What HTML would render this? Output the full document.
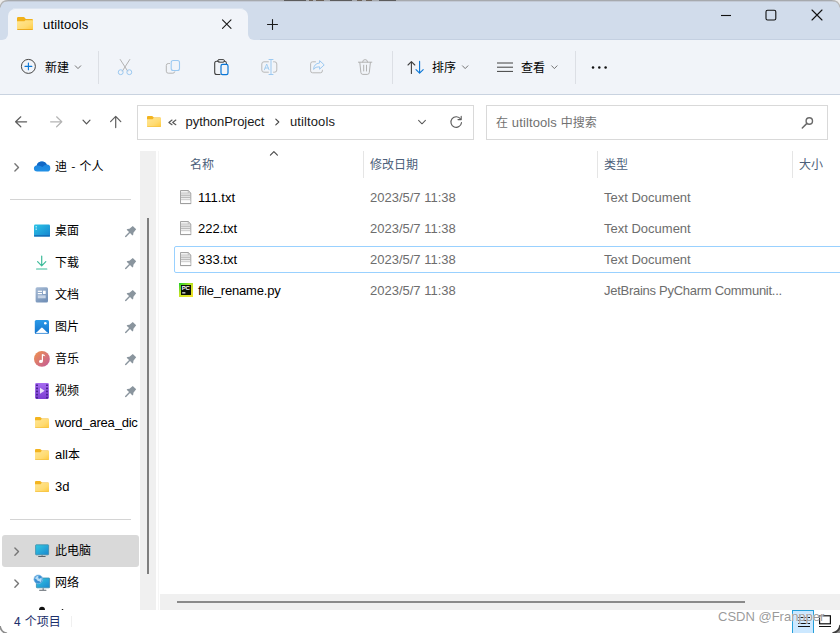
<!DOCTYPE html>
<html lang="zh-CN">
<head>
<meta charset="utf-8">
<title>utiltools</title>
<style>
*{box-sizing:border-box;margin:0;padding:0}
html,body{width:840px;height:633px;overflow:hidden;background:#fff}
body{position:relative;font-family:"Liberation Sans","Noto Sans CJK SC",sans-serif;font-size:12px;color:#000}
.abs{position:absolute}
.t{position:absolute;white-space:nowrap;line-height:16px}
.c{font-family:"Noto Sans CJK SC","Liberation Sans",sans-serif;font-size:12px}
.l{font-family:"Liberation Sans","Noto Sans CJK SC",sans-serif;font-size:13px}
#titlebar{left:0;top:0;width:840px;height:40px;background:#d1dceb}
#tab{left:8px;top:9px;width:240px;height:31px;background:#f1f4f9;border-radius:7px 7px 0 0}
#toolbar{left:0;top:40px;width:840px;height:55px;background:#f1f4f9;border-bottom:1px solid #c9d3e0}
.vsep{position:absolute;width:1px;background:#dcdfe5;top:51px;height:33px}
#addr{left:137px;top:105px;width:337px;height:35px;border:1px solid #d9d9d9;background:#fff}
#search{left:486px;top:105px;width:342px;height:35px;border:1px solid #d9d9d9;background:#fff}
#navstrip{left:140px;top:151px;width:16px;height:459px;background:#f0f0f0}
#navthumb{left:147px;top:218px;width:2px;height:356px;background:#7f7f7f}
.nsep{position:absolute;left:10px;width:121px;height:1px;background:#d4d4d4}
.nav{position:absolute;left:55px;white-space:nowrap;line-height:16px}
#hscroll{left:160px;top:594px;width:680px;height:16px;background:#f0f0f0}
#hthumb{left:177px;top:601px;width:568px;height:2px;background:#8a8a8a}
.hd{position:absolute;top:156px;color:#4c607a;white-space:nowrap;line-height:16px}
.csep{position:absolute;top:151px;width:1px;height:27px;background:#e5e5e5}
.fn{position:absolute;left:198px;white-space:nowrap;line-height:16px;color:#000}
.fd{position:absolute;left:370px;white-space:nowrap;line-height:16px;color:#6d6d6d}
.ft{position:absolute;left:604px;white-space:nowrap;line-height:16px;color:#6d6d6d}
svg{position:absolute;overflow:visible}
</style>
</head>
<body>
<!-- title bar -->
<div id="titlebar" class="abs"></div>
<div class="abs" style="left:0;top:0;width:840px;height:1px;background:#a6a9ad"></div>
<div class="abs" style="left:0;top:1px;width:840px;height:1px;background:#c3cad6"></div>
<div class="abs" style="left:284px;top:0;width:22px;height:1px;background:#5c5c5c"></div>
<div class="abs" style="left:309px;top:0;width:4px;height:1px;background:#6a6056"></div>
<div class="abs" style="left:316px;top:0;width:8px;height:1px;background:#6a6056"></div>
<div class="abs" style="left:330px;top:0;width:22px;height:1px;background:#5c5c5c"></div>
<div class="abs" style="left:357px;top:0;width:5px;height:1px;background:#6a6056"></div>
<div class="abs" style="left:366px;top:0;width:6px;height:1px;background:#6a6056"></div>
<div class="abs" style="left:379px;top:0;width:17px;height:1px;background:#5c5c5c"></div>
<div class="abs" style="left:0;top:39px;width:840px;height:1px;background:#c4d0e1"></div>
<div class="abs" style="left:13px;top:8px;width:230px;height:1px;background:#dde5f0"></div>
<div id="tab" class="abs"></div>
<div class="abs" style="left:2px;top:34px;width:6px;height:6px;background:#f1f4f9"></div>
<div class="abs" style="left:-4px;top:28px;width:12px;height:12px;background:#d1dceb;border-radius:0 0 6px 0"></div>
<div class="abs" style="left:248px;top:34px;width:6px;height:6px;background:#f1f4f9"></div>
<div class="abs" style="left:248px;top:28px;width:12px;height:12px;background:#d1dceb;border-radius:0 0 0 6px"></div>
<div class="t l" style="left:43px;top:17px;letter-spacing:0.15px">utiltools</div>

<!-- toolbar -->
<div id="toolbar" class="abs"></div>
<div class="t c" style="left:45px;top:59px">新建</div>
<div class="vsep" style="left:98px"></div>
<div class="vsep" style="left:392px"></div>
<div class="vsep" style="left:575px"></div>
<div class="t c" style="left:432px;top:59px">排序</div>
<div class="t c" style="left:521px;top:59px">查看</div>

<!-- address row -->
<div id="addr" class="abs"></div>
<div class="t l" style="left:185.5px;top:114px;color:#1a1a1a;letter-spacing:-0.05px">pythonProject</div>
<div class="t l" style="left:290px;top:114px;color:#1a1a1a;letter-spacing:0.1px">utiltools</div>
<div id="search" class="abs"></div>
<div class="t c" style="left:496px;top:114px;color:#717171;word-spacing:1.1px">在 <span class="l" style="letter-spacing:0.12px">utiltools</span> 中搜索</div>

<!-- nav pane -->
<div id="navstrip" class="abs"></div>
<div class="abs" style="left:158px;top:151px;width:1px;height:459px;background:#f6f6f6"></div>
<div id="navthumb" class="abs"></div>
<div class="nav c" style="top:158px;word-spacing:1.5px">迪 - 个人</div>
<div class="nsep" style="top:199px"></div>
<div class="nav c" style="top:222px">桌面</div>
<div class="nav c" style="top:254px">下载</div>
<div class="nav c" style="top:286px">文档</div>
<div class="nav c" style="top:318px">图片</div>
<div class="nav c" style="top:350px">音乐</div>
<div class="nav c" style="top:382px">视频</div>

<div class="nav l" style="top:415px;letter-spacing:-0.2px">word_area_dic</div>
<div class="nav c" style="top:446px"><span class="l">all</span>本</div>
<div class="nav l" style="top:479px">3d</div>
<div class="nsep" style="top:519px"></div>
<div class="abs" style="left:2px;top:535px;width:137px;height:32px;background:#d9d9d9;border-radius:3px"></div>
<div class="nav c" style="top:542px">此电脑</div>
<div class="nav c" style="top:574px">网络</div>

<!-- file list -->
<div class="hd c" style="left:190px">名称</div>
<div class="hd c" style="left:370px">修改日期</div>
<div class="hd c" style="left:604px">类型</div>
<div class="hd c" style="left:799px">大小</div>
<div class="csep" style="left:363px"></div>
<div class="csep" style="left:597px"></div>
<div class="csep" style="left:792px"></div>
<div class="abs" style="left:174px;top:246px;width:680px;height:27px;border:1px solid #99d1ff;border-radius:2px"></div>
<div class="fn l" style="top:190px;letter-spacing:0px">111.txt</div><div class="fd l" style="top:190px">2023/5/7 11:38</div><div class="ft l" style="top:190px;letter-spacing:0px">Text Document</div>
<div class="fn l" style="top:221px;letter-spacing:0px">222.txt</div><div class="fd l" style="top:221px">2023/5/7 11:38</div><div class="ft l" style="top:221px;letter-spacing:0px">Text Document</div>
<div class="fn l" style="top:252px;letter-spacing:0px">333.txt</div><div class="fd l" style="top:252px">2023/5/7 11:38</div><div class="ft l" style="top:252px;letter-spacing:0px">Text Document</div>
<div class="fn l" style="top:283px;letter-spacing:-0.2px">file_rename.py</div><div class="fd l" style="top:283px">2023/5/7 11:38</div><div class="ft l" style="top:283px;letter-spacing:-0.27px">JetBrains PyCharm Communit...</div>

<!-- bottom -->
<div id="hscroll" class="abs"></div>
<div id="hthumb" class="abs"></div>
<div class="abs" style="left:0;top:610px;width:840px;height:23px;background:#fff"></div>
<div class="abs" style="left:71px;top:616px;width:1px;height:11px;background:#f0f0f0"></div>
<div class="t c" style="left:14px;top:613px;color:#1c2f6b;word-spacing:1.4px">4 个项目</div>
<svg id="icons" width="840" height="633" viewBox="0 0 840 633" style="left:0;top:0">
<defs>
<linearGradient id="fg" x1="0" y1="0" x2="1" y2="1"><stop offset="0" stop-color="#ffe695"/><stop offset="0.6" stop-color="#ffdb72"/><stop offset="1" stop-color="#ffc93a"/></linearGradient>
<linearGradient id="desk" x1="0" y1="0" x2="1" y2="1"><stop offset="0" stop-color="#2cc4e6"/><stop offset="1" stop-color="#1583cf"/></linearGradient>
<linearGradient id="doc" x1="0" y1="0" x2="0.6" y2="1"><stop offset="0" stop-color="#a9bdd6"/><stop offset="1" stop-color="#7391b8"/></linearGradient><linearGradient id="vid" x1="0" y1="0" x2="0" y2="1"><stop offset="0" stop-color="#a56bf0"/><stop offset="1" stop-color="#7c3ed2"/></linearGradient><linearGradient id="mon" x1="0" y1="0" x2="1" y2="1"><stop offset="0" stop-color="#33cbe2"/><stop offset="1" stop-color="#1a86cf"/></linearGradient><linearGradient id="pic" x1="0" y1="0" x2="0" y2="1"><stop offset="0" stop-color="#2b9ae8"/><stop offset="1" stop-color="#1273cc"/></linearGradient>
<linearGradient id="mus" x1="0" y1="0" x2="1" y2="1"><stop offset="0" stop-color="#f0934c"/><stop offset="1" stop-color="#c25a9a"/></linearGradient>
<linearGradient id="pcg" x1="0" y1="0" x2="0.8" y2="1"><stop offset="0" stop-color="#19cf2a"/><stop offset="0.5" stop-color="#c2e224"/><stop offset="1" stop-color="#ece02a"/></linearGradient>
<linearGradient id="cloud" x1="0" y1="0" x2="0" y2="1"><stop offset="0" stop-color="#1b82dc"/><stop offset="1" stop-color="#2190e6"/></linearGradient>
</defs>
<g transform="translate(17,17)">
<path d="M0 1.2 Q0 0 1.2 0 H6.6 Q7.2 0 7.6 0.5 L8.8 1.9 H14.8 Q16 1.9 16 3.1 V6 H0 Z" fill="#f1b11b"/>
<path d="M0 4.2 H7.4 L8.4 3.3 H16 V11.8 Q16 13 14.8 13 H1.2 Q0 13 0 11.8 Z" fill="url(#fg)"/>
<path d="M0 11.9 H16 Q16 13 14.8 13 H1.2 Q0 13 0 11.9 Z" fill="#ecab20"/>
</g>
<path d="M222.5 19.8 L231 28.3 M231 19.8 L222.5 28.3" stroke="#1a1a1a" stroke-width="1.1" fill="none" stroke-linecap="round"/>
<path d="M267.5 24.5 H277.5 M272.5 19.5 V29.5" stroke="#1a1a1a" stroke-width="1.1" fill="none" stroke-linecap="round"/>
<path d="M721 15.5 H731" stroke="#111" stroke-width="1.1" fill="none"/>
<rect x="766" y="10.2" width="9.8" height="9.8" rx="1.6" fill="none" stroke="#111" stroke-width="1.1"/>
<path d="M812 10 L822 20 M822 10 L812 20" stroke="#111" stroke-width="1.1" fill="none" stroke-linecap="round"/>
<circle cx="28.4" cy="66.4" r="7" fill="none" stroke="#454545" stroke-width="1"/>
<path d="M25 66.4 H31.8 M28.4 63 V69.8" stroke="#0a76d6" stroke-width="1.1" fill="none" stroke-linecap="round"/>
<path d="M75.3 65.8 L78 68.60000000000001 L80.7 65.8" fill="none" stroke="#757575" stroke-width="1" stroke-linecap="round" stroke-linejoin="round"/>
<path d="M120.2 59.5 L127.6 71 M129.8 59.5 L122.4 71" stroke="#b3b3b3" stroke-width="1" fill="none" stroke-linecap="round"/>
<circle cx="120.7" cy="72.2" r="2.45" fill="none" stroke="#9cc9f1" stroke-width="1"/><circle cx="129.3" cy="72.2" r="2.45" fill="none" stroke="#9cc9f1" stroke-width="1"/>
<path d="M169.5 63.5 H168.3 Q166.3 63.5 166.3 65.5 V71.2 Q166.3 73.2 168.3 73.2 H172.8 Q174.6 73.2 174.8 71.8" fill="none" stroke="#b5b5b5" stroke-width="1" stroke-linecap="round"/>
<rect x="171.2" y="60.5" width="8.3" height="10" rx="2" fill="none" stroke="#9cc9f1" stroke-width="1.1"/>
<path d="M219 61.2 H216.7 Q214.7 61.2 214.7 63.2 V72.5 Q214.7 74.5 216.7 74.5 H220" fill="none" stroke="#404040" stroke-width="1.1" stroke-linecap="round"/>
<path d="M224 61.2 H224.6 Q226.4 61.2 226.4 63.2 V63.6" fill="none" stroke="#404040" stroke-width="1.1" stroke-linecap="round"/>
<rect x="217.7" y="59.6" width="6.8" height="2.6" rx="1.3" fill="none" stroke="#404040" stroke-width="1"/>
<rect x="221" y="64.4" width="7" height="10.2" rx="1.6" fill="none" stroke="#0a76d6" stroke-width="1.2"/>
<path d="M268.4 61.8 H264 Q261.8 61.8 261.8 64 V70 Q261.8 72.2 264 72.2 H268.4" fill="none" stroke="#b8b8b8" stroke-width="1" stroke-linecap="round"/>
<path d="M273.6 61.8 H274.6 Q276.8 61.8 276.8 64 V70 Q276.8 72.2 274.6 72.2 H273.6" fill="none" stroke="#b8b8b8" stroke-width="1" stroke-linecap="round"/>
<path d="M269 59.5 H273 M271 59.5 V74.5 M269 74.5 H273" fill="none" stroke="#9cc9f1" stroke-width="1" stroke-linecap="round"/>
<path d="M264.4 69.8 L266.7 64 L269 69.8 M265.2 68 H268.2" fill="none" stroke="#9cc9f1" stroke-width="0.9" stroke-linecap="round" stroke-linejoin="round"/>
<path d="M315.5 61.8 H312.6 Q310.6 61.8 310.6 63.8 V70.8 Q310.6 72.8 312.6 72.8 H320.4 Q322.4 72.8 322.4 70.8 V70.2" fill="none" stroke="#b8b8b8" stroke-width="1" stroke-linecap="round"/>
<path d="M319.6 60.6 L324.2 64.9 L319.6 69.2 V66.8 Q315.4 66.4 313.6 69.4 Q313.8 63.6 319.6 63 Z" fill="none" stroke="#9cc9f1" stroke-width="1" stroke-linejoin="round"/>
<path d="M358.4 62.2 H371.8 M362.6 62 Q362.6 59.6 365.1 59.6 Q367.6 59.6 367.6 62 M359.8 62.4 L360.9 72.6 Q361.1 74.4 362.9 74.4 H367.3 Q369.1 74.4 369.3 72.6 L370.4 62.4 M363.7 65.2 V71 M366.5 65.2 V71" fill="none" stroke="#b3b3b3" stroke-width="1" stroke-linecap="round" stroke-linejoin="round"/>
<path d="M411.4 73.4 V61.6 M408 65 L411.4 61.6 L414.8 65" fill="none" stroke="#404040" stroke-width="1.1" stroke-linecap="round" stroke-linejoin="round"/>
<path d="M419.6 61.4 V73.2 M416 69.6 L419.6 73.2 L423.2 69.6" fill="none" stroke="#0a76d6" stroke-width="1.1" stroke-linecap="round" stroke-linejoin="round"/>
<path d="M462.5 65.8 L465.2 68.60000000000001 L467.9 65.8" fill="none" stroke="#757575" stroke-width="1" stroke-linecap="round" stroke-linejoin="round"/>
<path d="M497 63 H513 M497 67.2 H513 M497 71.4 H513" stroke="#404040" stroke-width="1" fill="none"/>
<path d="M551.6999999999999 65.8 L554.4 68.60000000000001 L557.1 65.8" fill="none" stroke="#757575" stroke-width="1" stroke-linecap="round" stroke-linejoin="round"/>
<circle cx="593" cy="67.6" r="1.25" fill="#111"/><circle cx="599.3" cy="67.6" r="1.25" fill="#111"/><circle cx="605.6" cy="67.6" r="1.25" fill="#111"/>
<path d="M26.6 121.8 H15.8 M20.8 116.8 L15.6 121.8 L20.8 126.8" fill="none" stroke="#5e5e5e" stroke-width="1.2" stroke-linecap="round" stroke-linejoin="round"/>
<path d="M50.6 121.8 H61.6 M56.6 116.8 L61.8 121.8 L56.6 126.8" fill="none" stroke="#b4b4b4" stroke-width="1.2" stroke-linecap="round" stroke-linejoin="round"/>
<path d="M83.0 120.1 L86.5 123.9 L90.0 120.1" fill="none" stroke="#555" stroke-width="1.2" stroke-linecap="round" stroke-linejoin="round"/>
<path d="M115.7 127.6 V116.6 M110.6 121.6 L115.7 116.4 L120.8 121.6" fill="none" stroke="#5e5e5e" stroke-width="1.2" stroke-linecap="round" stroke-linejoin="round"/>
<g transform="translate(147,116)">
<path d="M0 1 Q0 0 1 0 H5 Q5.5 0 5.9 0.4 L6.8 1.5 H13 Q14 1.5 14 2.5 V5 H0 Z" fill="#f3b41f"/>
<path d="M0 3.2 H5.6 L6.6 1.9 H14 V10.2 Q14 11 13.2 11 H0.8 Q0 11 0 10.2 Z" fill="url(#fg)"/>
<path d="M0 10.3 H14 Q14 11 13.2 11 H0.8 Q0 11 0 10.3 Z" fill="#f6c445"/>
</g>
<path d="M172 120.1 L168.9 122.4 L172 124.7 M175.8 120.1 L172.7 122.4 L175.8 124.7" fill="none" stroke="#5a5a5a" stroke-width="1.25" stroke-linecap="round" stroke-linejoin="round"/>
<path d="M275.8 119.2 L278.8 122 L275.8 124.8" fill="none" stroke="#444" stroke-width="1.1" stroke-linecap="round" stroke-linejoin="round"/>
<path d="M418.6 120.39999999999999 L422 123.8 L425.4 120.39999999999999" fill="none" stroke="#5a5a5a" stroke-width="1.05" stroke-linecap="round" stroke-linejoin="round"/>
<path d="M460.6 119.0 A5.3 5.3 0 1 0 461.5 122.6" fill="none" stroke="#5a5a5a" stroke-width="1.1" stroke-linecap="round"/>
<path d="M461.2 116.4 V119.6 H458" fill="none" stroke="#5a5a5a" stroke-width="1.1" stroke-linecap="round" stroke-linejoin="round"/>
<circle cx="809.3" cy="121" r="3.2" fill="none" stroke="#6a6a6a" stroke-width="1.4"/><path d="M806.9 123.4 L802.3 128" stroke="#6a6a6a" stroke-width="1.5" stroke-linecap="round"/>
<path d="M14.899999999999999 163.8 L18.5 167.4 L14.899999999999999 171.0" fill="none" stroke="#767676" stroke-width="1.4" stroke-linecap="round" stroke-linejoin="round"/>
<path d="M37.2 171.6 Q33.9 171.6 33.9 168.6 Q33.9 166 36.6 165.6 Q37.8 161.4 42 161.4 Q45.4 161.4 46.8 164.6 Q50.3 164.8 50.3 168.2 Q50.3 171.6 47 171.6 Z" fill="url(#cloud)"/>
<path d="M36.6 165.6 Q37.8 161.4 42 161.4 Q45.4 161.4 46.8 164.6 Q44 165 42.4 167 Q40 164.8 36.6 165.6 Z" fill="#1166c4" opacity="0.95"/>
<rect x="34" y="224.6" width="16" height="12" rx="1.2" fill="url(#desk)"/><rect x="34" y="235.2" width="16" height="1.4" rx="0.6" fill="#1366b0"/><rect x="35.6" y="226.2" width="1.2" height="1.2" fill="#d8f4ff"/><rect x="35.6" y="228.6" width="1.2" height="1.2" fill="#d8f4ff"/>
<path d="M41.7 256 V265.6 M37.6 261.6 L41.7 265.8 L45.8 261.6" fill="none" stroke="#3dbb9a" stroke-width="1.2" stroke-linecap="round" stroke-linejoin="round"/><path d="M36.6 269 H46.8" stroke="#3dbb9a" stroke-width="1.2" stroke-linecap="round"/>
<rect x="35.6" y="287.2" width="12.4" height="15.4" rx="1.5" fill="url(#doc)"/><rect x="37.8" y="290.7" width="4.2" height="1.2" fill="#fff"/><rect x="37.8" y="293" width="4.2" height="1.2" fill="#fff"/><rect x="43" y="290.7" width="2.7" height="3.3" fill="#fff"/><rect x="37.8" y="295.3" width="7.9" height="3" fill="#c6d3e5"/>
<rect x="34.8" y="320" width="14.2" height="14" rx="1.6" fill="url(#pic)"/><path d="M36 333 L41.1 327.9 Q41.9 327.2 42.7 327.9 L47.8 333 Z" fill="#fff"/><rect x="36" y="332.6" width="11.8" height="0.8" fill="#cfe6fa"/><circle cx="45.3" cy="323.3" r="1.3" fill="#fff"/>
<circle cx="41.9" cy="358.9" r="7.9" fill="url(#mus)"/><path d="M42.4 354.2 V361.2" stroke="#fff" stroke-width="1.2" fill="none"/><path d="M42.4 354 Q44.8 354.2 45.4 356.4 Q44 355.6 42.4 356 Z" fill="#fff"/><ellipse cx="40.9" cy="361.4" rx="1.9" ry="1.6" fill="#fff"/>
<rect x="35.1" y="383" width="13.8" height="16" rx="1.4" fill="url(#vid)"/><rect x="36" y="384.4" width="2" height="1.7" rx="0.3" fill="#4c2494"/><rect x="46" y="384.4" width="2" height="1.7" rx="0.3" fill="#4c2494"/><rect x="36" y="387.5" width="2" height="1.7" rx="0.3" fill="#4c2494"/><rect x="46" y="387.5" width="2" height="1.7" rx="0.3" fill="#4c2494"/><rect x="36" y="390.6" width="2" height="1.7" rx="0.3" fill="#4c2494"/><rect x="46" y="390.6" width="2" height="1.7" rx="0.3" fill="#4c2494"/><rect x="36" y="393.7" width="2" height="1.7" rx="0.3" fill="#4c2494"/><rect x="46" y="393.7" width="2" height="1.7" rx="0.3" fill="#4c2494"/><rect x="36" y="396.8" width="2" height="1.7" rx="0.3" fill="#4c2494"/><rect x="46" y="396.8" width="2" height="1.7" rx="0.3" fill="#4c2494"/><path d="M40 387.8 L44.6 390.8 L40 393.8 Z" fill="#ece4fa"/>
<g transform="translate(130.1,232.0) rotate(45)" fill="#8a959e" stroke="none">
<path d="M-2.4 -6.2 H2.4 L2.8 -1.9 L4.1 -0.3 V0.8 H0.7 V6.6 Q0 7.2 -0.7 6.6 V0.8 H-4.1 V-0.3 L-2.8 -1.9 Z"/>
</g>
<g transform="translate(130.1,264.0) rotate(45)" fill="#8a959e" stroke="none">
<path d="M-2.4 -6.2 H2.4 L2.8 -1.9 L4.1 -0.3 V0.8 H0.7 V6.6 Q0 7.2 -0.7 6.6 V0.8 H-4.1 V-0.3 L-2.8 -1.9 Z"/>
</g>
<g transform="translate(130.1,296.0) rotate(45)" fill="#8a959e" stroke="none">
<path d="M-2.4 -6.2 H2.4 L2.8 -1.9 L4.1 -0.3 V0.8 H0.7 V6.6 Q0 7.2 -0.7 6.6 V0.8 H-4.1 V-0.3 L-2.8 -1.9 Z"/>
</g>
<g transform="translate(130.1,328.0) rotate(45)" fill="#8a959e" stroke="none">
<path d="M-2.4 -6.2 H2.4 L2.8 -1.9 L4.1 -0.3 V0.8 H0.7 V6.6 Q0 7.2 -0.7 6.6 V0.8 H-4.1 V-0.3 L-2.8 -1.9 Z"/>
</g>
<g transform="translate(130.1,360.0) rotate(45)" fill="#8a959e" stroke="none">
<path d="M-2.4 -6.2 H2.4 L2.8 -1.9 L4.1 -0.3 V0.8 H0.7 V6.6 Q0 7.2 -0.7 6.6 V0.8 H-4.1 V-0.3 L-2.8 -1.9 Z"/>
</g>
<g transform="translate(130.1,392.0) rotate(45)" fill="#8a959e" stroke="none">
<path d="M-2.4 -6.2 H2.4 L2.8 -1.9 L4.1 -0.3 V0.8 H0.7 V6.6 Q0 7.2 -0.7 6.6 V0.8 H-4.1 V-0.3 L-2.8 -1.9 Z"/>
</g>
<g transform="translate(35,417)">
<path d="M0 1 Q0 0 1 0 H5 Q5.5 0 5.9 0.4 L6.8 1.5 H13 Q14 1.5 14 2.5 V5 H0 Z" fill="#f3b41f"/>
<path d="M0 3.2 H5.6 L6.6 1.9 H14 V10.2 Q14 11 13.2 11 H0.8 Q0 11 0 10.2 Z" fill="url(#fg)"/>
<path d="M0 10.3 H14 Q14 11 13.2 11 H0.8 Q0 11 0 10.3 Z" fill="#f6c445"/>
</g>
<g transform="translate(35,449)">
<path d="M0 1 Q0 0 1 0 H5 Q5.5 0 5.9 0.4 L6.8 1.5 H13 Q14 1.5 14 2.5 V5 H0 Z" fill="#f3b41f"/>
<path d="M0 3.2 H5.6 L6.6 1.9 H14 V10.2 Q14 11 13.2 11 H0.8 Q0 11 0 10.2 Z" fill="url(#fg)"/>
<path d="M0 10.3 H14 Q14 11 13.2 11 H0.8 Q0 11 0 10.3 Z" fill="#f6c445"/>
</g>
<g transform="translate(35,481)">
<path d="M0 1 Q0 0 1 0 H5 Q5.5 0 5.9 0.4 L6.8 1.5 H13 Q14 1.5 14 2.5 V5 H0 Z" fill="#f3b41f"/>
<path d="M0 3.2 H5.6 L6.6 1.9 H14 V10.2 Q14 11 13.2 11 H0.8 Q0 11 0 10.2 Z" fill="url(#fg)"/>
<path d="M0 10.3 H14 Q14 11 13.2 11 H0.8 Q0 11 0 10.3 Z" fill="#f6c445"/>
</g>
<path d="M14.899999999999999 548.0 L18.5 551.6 L14.899999999999999 555.2" fill="none" stroke="#767676" stroke-width="1.4" stroke-linecap="round" stroke-linejoin="round"/>
<rect x="35.6" y="544.8" width="13" height="10" rx="0.6" fill="url(#mon)" stroke="#3c8cab" stroke-width="0.8"/><rect x="41.4" y="555.2" width="1.4" height="1.1" fill="#7a8590"/><rect x="38.2" y="556" width="7.4" height="1" rx="0.3" fill="#5b636b"/>
<path d="M14.899999999999999 580.0 L18.5 583.6 L14.899999999999999 587.2" fill="none" stroke="#767676" stroke-width="1.4" stroke-linecap="round" stroke-linejoin="round"/>
<rect x="36.4" y="578" width="13.2" height="9.8" rx="0.6" fill="url(#mon)" stroke="#3c8cab" stroke-width="0.8"/><rect x="42.5" y="588.2" width="1.4" height="1.7" fill="#7a8590"/><rect x="39.2" y="589.8" width="7.2" height="1" rx="0.3" fill="#5b636b"/><circle cx="38.3" cy="579.3" r="4.4" fill="#3b8fd3" stroke="#8cc3ea" stroke-width="0.6"/><path d="M34.8 578.2 Q36.4 575.8 38.8 575.6 Q37.6 577.2 38.6 578.6 Q40.2 579 41.6 577.6 Q42.4 580.4 40.4 582.4 Q39.6 580.6 37.8 581 Q37 579.2 34.8 578.2Z" fill="#b5dcf5"/>
<path d="M39 610 Q39.1 606.8 42 606.8 Q44.9 606.8 45 610 Z" fill="#111"/><rect x="61.8" y="609" width="1.4" height="1" fill="#222"/>
<path d="M270.4 155.2 L273.9 151.7 L277.4 155.2" fill="none" stroke="#4a4a4a" stroke-width="1.15" stroke-linecap="round" stroke-linejoin="round"/>
<g transform="translate(180,190)">
<path d="M0.5 0.5 H8.2 L10.8 3.1 V13.5 H0.5 Z" fill="#f1f1f1" stroke="#9f9f9f" stroke-width="0.95"/>
<path d="M8.2 0.5 V3.1 H10.8 Z" fill="#dcdcdc" stroke="#ababab" stroke-width="0.6"/>
<rect x="1" y="2.6" width="7.4" height="1" fill="#c4c4c4"/>
<rect x="1" y="4.7" width="9.4" height="1" fill="#adadad"/>
<rect x="1" y="6.8" width="9.4" height="1" fill="#adadad"/>
<rect x="1" y="8.9" width="9.4" height="1" fill="#cfcfcf"/>
<rect x="1" y="10.6" width="9.4" height="2.4" fill="#fdfdfd"/>
<rect x="0.2" y="13.4" width="11" height="0.7" fill="#9a9a9a"/>
</g>
<g transform="translate(180,221)">
<path d="M0.5 0.5 H8.2 L10.8 3.1 V13.5 H0.5 Z" fill="#f1f1f1" stroke="#9f9f9f" stroke-width="0.95"/>
<path d="M8.2 0.5 V3.1 H10.8 Z" fill="#dcdcdc" stroke="#ababab" stroke-width="0.6"/>
<rect x="1" y="2.6" width="7.4" height="1" fill="#c4c4c4"/>
<rect x="1" y="4.7" width="9.4" height="1" fill="#adadad"/>
<rect x="1" y="6.8" width="9.4" height="1" fill="#adadad"/>
<rect x="1" y="8.9" width="9.4" height="1" fill="#cfcfcf"/>
<rect x="1" y="10.6" width="9.4" height="2.4" fill="#fdfdfd"/>
<rect x="0.2" y="13.4" width="11" height="0.7" fill="#9a9a9a"/>
</g>
<g transform="translate(180,252)">
<path d="M0.5 0.5 H8.2 L10.8 3.1 V13.5 H0.5 Z" fill="#f1f1f1" stroke="#9f9f9f" stroke-width="0.95"/>
<path d="M8.2 0.5 V3.1 H10.8 Z" fill="#dcdcdc" stroke="#ababab" stroke-width="0.6"/>
<rect x="1" y="2.6" width="7.4" height="1" fill="#c4c4c4"/>
<rect x="1" y="4.7" width="9.4" height="1" fill="#adadad"/>
<rect x="1" y="6.8" width="9.4" height="1" fill="#adadad"/>
<rect x="1" y="8.9" width="9.4" height="1" fill="#cfcfcf"/>
<rect x="1" y="10.6" width="9.4" height="2.4" fill="#fdfdfd"/>
<rect x="0.2" y="13.4" width="11" height="0.7" fill="#9a9a9a"/>
</g>
<rect x="179" y="283" width="14" height="14" fill="url(#pcg)"/><rect x="181" y="285" width="10" height="10" fill="#0a0f08"/><rect x="182.2" y="292.2" width="3.2" height="1.3" fill="#e8e8e8"/>
<text x="181.7" y="290.3" font-family="Liberation Sans,sans-serif" font-weight="700" font-size="6" fill="#fff" letter-spacing="-0.3">PC</text>
<rect x="792.5" y="610.5" width="21" height="24" fill="#cce8ff" stroke="#26a0da" stroke-width="1"/>
<path d="M798 617.5 H810 M798 620.5 H810 M798 623.5 H810 M798 626.5 H810" stroke="#111" stroke-width="1" fill="none"/>
<rect x="819.6" y="615.8" width="10.8" height="8" fill="none" stroke="#111" stroke-width="1.2"/><path d="M819 626.5 H831" stroke="#111" stroke-width="1" fill="none"/>
<path d="M0 0 H7.5 Q1 0.8 0 7.5 Z" fill="#ebebeb"/><path d="M0 7.5 Q1 0.8 7.5 0.6" fill="none" stroke="#b4b4b4" stroke-width="1.2"/>
<path d="M840 0 H832.5 Q839 0.8 840 7.5 Z" fill="#efefef"/><path d="M840 7.5 Q839 0.8 832.5 0.6" fill="none" stroke="#b9b9b9" stroke-width="1.2"/>
<path d="M0 626 Q0.8 632.2 7 633.4" fill="none" stroke="#8e8e8e" stroke-width="1.8"/>
<path d="M840 625.5 Q839.4 632.4 832 633 H840 Z" fill="#8a8a8a"/><path d="M840.3 625 Q839.2 632 832.5 633.2" fill="none" stroke="#3c3c3c" stroke-width="1.8"/>
</svg>
<div class="t" style="left:718px;top:609px;font-size:13px;text-shadow:0 0 1px #fff,0 0 1px #fff;color:rgba(120,120,120,0.75)">CSDN @Franpper</div>
</body>
</html>
